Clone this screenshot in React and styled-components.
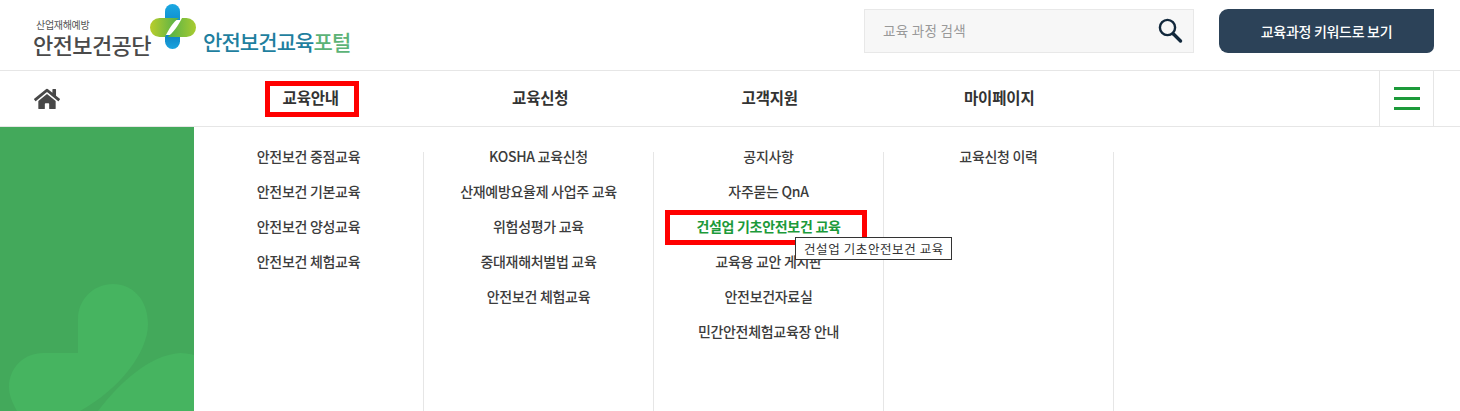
import React from 'react';
import styled, { createGlobalStyle } from 'styled-components';
import { FaHome } from 'react-icons/fa';

const Global = createGlobalStyle`
  html, body { margin: 0; padding: 0; background: #fff; overflow: hidden; }
  * { box-sizing: border-box; }
  body { font-family: "Noto Sans CJK KR", "Noto Sans", sans-serif; color: #333; }
`;

const Page = styled.div`
  position: relative;
  width: 1460px;
  height: 411px;
  overflow: hidden;
`;

const Header = styled.header`
  height: 71px;
  border-bottom: 1px solid #e6e6e6;
  display: flex;
  align-items: flex-start;
  padding-right: 26px;
`;

const Logo = styled.div`
  display: flex;
  align-items: flex-start;
  padding: 4px 0 0 33px;
  flex: 1;
`;

const OrgBlock = styled.div`
  display: flex;
  flex-direction: column;
  padding-top: 14px;
  width: 117px;
`;

const OrgSmall = styled.span`
  font-size: 10px;
  line-height: 13px;
  margin-left: 3px;
  color: #555;
  letter-spacing: -0.3px;
  white-space: nowrap;
`;

const OrgName = styled.span`
  font-size: 22px;
  line-height: 26px;
  font-weight: 500;
  color: #4a4a4a;
  letter-spacing: -0.6px;
  white-space: nowrap;
`;

const Mark = styled.svg`
  width: 46px;
  height: 46px;
  flex: none;
`;

const Portal = styled.span`
  margin: 22px 0 0 7px;
  font-size: 21px;
  line-height: 30px;
  font-weight: 500;
  color: #1f7f9f;
  letter-spacing: -0.9px;
  white-space: nowrap;
`;

const PortalAccent = styled.span`
  color: #5cb377;
`;

const Search = styled.div`
  width: 330px;
  height: 44px;
  margin-top: 9px;
  background: #f7f7f7;
  border: 1px solid #e8e8e8;
  display: flex;
  align-items: center;
  justify-content: space-between;
  padding: 0 7px 0 18px;
`;

const SearchHint = styled.span`
  font-size: 13.5px;
  line-height: 18px;
  margin-top: -2px;
  color: #999;
  letter-spacing: 0.3px;
`;

const KeywordButton = styled.button`
  width: 215px;
  height: 44px;
  margin: 9px 0 0 25px;
  border: 0;
  border-radius: 9px 0 7px 9px;
  background: #2c4258;
  color: #fff;
  font: 500 14px "Noto Sans CJK KR", sans-serif;
  letter-spacing: -0.3px;
`;

const Nav = styled.nav`
  height: 56px;
  border-bottom: 1px solid #e6e6e6;
  display: flex;
  align-items: stretch;
`;

const HomeCell = styled.div`
  width: 196px;
  flex: none;
  padding-left: 34px;
  display: flex;
  align-items: center;
  color: #484848;
`;

const NavItem = styled.div`
  width: 229.5px;
  flex: none;
  display: flex;
  align-items: center;
  justify-content: center;
  padding-bottom: 3px;
  font-size: 15.5px;
  font-weight: 700;
  color: #333;
  letter-spacing: -0.15px;
`;

const NavSpacer = styled.div`
  flex: 1;
`;

const MenuCell = styled.div`
  width: 55px;
  flex: none;
  margin-right: 26px;
  border-left: 1px solid #e6e6e6;
  border-right: 1px solid #e6e6e6;
  display: flex;
  flex-direction: column;
  align-items: center;
  justify-content: center;
  gap: 7px;
`;

const MenuLine = styled.span`
  width: 26px;
  height: 3px;
  background: #1c9a3a;
`;

const Panel = styled.div`
  height: 284px;
  display: flex;
`;

const Side = styled.aside`
  width: 194px;
  flex: none;
  background: #43a95b;
`;

const SideArt = styled.svg`
  display: block;
  width: 194px;
  height: 284px;
`;

const Col = styled.ul`
  width: 230px;
  flex: none;
  list-style: none;
  margin: 25px 0 0;
  padding: 0;
  border-right: 1px solid #e6e6e6;
  height: 259px;
  display: flex;
  flex-direction: column;
  gap: 15px;
`;

const Entry = styled.li`
  height: 20px;
  line-height: 20px;
  text-align: center;
  font-size: 14px;
  white-space: nowrap;
  letter-spacing: -0.3px;
  color: ${p => (p.$active ? '#1c9a3a' : '#3c3c3c')};
  font-weight: ${p => (p.$active ? 700 : 500)};
  &:first-child { margin-top: -6px; }
`;

const RedBox = styled.div`
  position: absolute;
  border: 5px solid #ff0000;
  left: ${p => p.$x}px;
  top: ${p => p.$y}px;
  width: ${p => p.$w}px;
  height: ${p => p.$h}px;
`;

const Tip = styled.div`
  position: absolute;
  left: 795px;
  top: 237px;
  width: 157px;
  height: 23px;
  background: #fff;
  border: 1px solid #333;
  font-size: 12.5px;
  line-height: 22px;
  padding-left: 8px;
  color: #333;
  letter-spacing: 0.6px;
  white-space: nowrap;
`;

const columns = [
  ['안전보건 중점교육', '안전보건 기본교육', '안전보건 양성교육', '안전보건 체험교육'],
  ['KOSHA 교육신청', '산재예방요율제 사업주 교육', '위험성평가 교육', '중대재해처벌법 교육', '안전보건 체험교육'],
  ['공지사항', '자주묻는 QnA', '건설업 기초안전보건 교육', '교육용 교안 게시판', '안전보건자료실', '민간안전체험교육장 안내'],
  ['교육신청 이력'],
];

export default function App() {
  return (
    <Page>
      <Global />
      <Header>
        <Logo>
          <OrgBlock>
            <OrgSmall>산업재해예방</OrgSmall>
            <OrgName>안전보건공단</OrgName>
          </OrgBlock>
          <Mark viewBox="0 0 46 46">
            <defs>
              <linearGradient id="bt" x1="0" y1="0" x2="0" y2="1">
                <stop offset="0" stopColor="#1aa8e2" />
                <stop offset="1" stopColor="#1190d0" />
              </linearGradient>
              <linearGradient id="bb" x1="0" y1="0" x2="0" y2="1">
                <stop offset="0" stopColor="#0f84c4" />
                <stop offset="1" stopColor="#1aa3de" />
              </linearGradient>
              <linearGradient id="gl" x1="0" y1="0" x2="1" y2="0">
                <stop offset="0" stopColor="#b9cd2b" />
                <stop offset="1" stopColor="#4fb04a" />
              </linearGradient>
              <linearGradient id="gr" x1="0" y1="0" x2="1" y2="0">
                <stop offset="0" stopColor="#4fb04a" />
                <stop offset="1" stopColor="#a9cb30" />
              </linearGradient>
            </defs>
            <path d="M15 7.5 A7.5 7.5 0 0 1 30 7.5 V16 H15 Z" fill="url(#bt)" />
            <path d="M15 31 H30 V37.5 A7.5 7.5 0 0 1 15 37.5 Z" fill="url(#bb)" />
            <path d="M9.5 14 H29 C23 18 19 25 15 33 H9.5 A9.5 9.5 0 0 1 9.5 14 Z" fill="url(#gl)" />
            <path d="M36.5 33 H17.5 C23 29 28 22 32 14 H36.5 A9.5 9.5 0 0 1 36.5 33 Z" fill="url(#gr)" />
          </Mark>
          <Portal>안전보건교육<PortalAccent>포털</PortalAccent></Portal>
        </Logo>
        <Search>
          <SearchHint>교육 과정 검색</SearchHint>
          <svg width="32" height="32" viewBox="0 0 32 32" fill="none" stroke="#12283c">
            <circle cx="13.5" cy="12.5" r="7.6" strokeWidth="2.4" />
            <path d="M19.5 19 L26.5 26" strokeWidth="3.4" strokeLinecap="round" />
          </svg>
        </Search>
        <KeywordButton>교육과정 키워드로 보기</KeywordButton>
      </Header>
      <Nav>
        <HomeCell><FaHome size={26} /></HomeCell>
        <NavItem>교육안내</NavItem>
        <NavItem>교육신청</NavItem>
        <NavItem>고객지원</NavItem>
        <NavItem>마이페이지</NavItem>
        <NavSpacer />
        <MenuCell>
          <MenuLine /><MenuLine /><MenuLine />
        </MenuCell>
      </Nav>
      <Panel>
        <Side>
          <SideArt viewBox="0 0 194 284">
            <path d="M78 226 V192 C78 172 94 157 113 157 C132 157 148 172 148 197 C148 225 120 262 80 284 H17 C12 275 9 268 9 260 C9 240 25 226 43 226 Z" fill="#46b460" />
            <path d="M98 284 C120 255 150 228 180 226 C186 226 190 227 194 228 V284 Z" fill="#46b460" />
          </SideArt>
        </Side>
        {columns.map((c, i) => (
          <Col key={i}>
            {c.map(t => <Entry key={t} $active={t.startsWith('건설업')}>{t}</Entry>)}
          </Col>
        ))}
      </Panel>
      <RedBox $x={265} $y={81} $w={94} $h={36} />
      <RedBox $x={665} $y={210} $w={202} $h={35} />
      <Tip>건설업 기초안전보건 교육</Tip>
    </Page>
  );
}
